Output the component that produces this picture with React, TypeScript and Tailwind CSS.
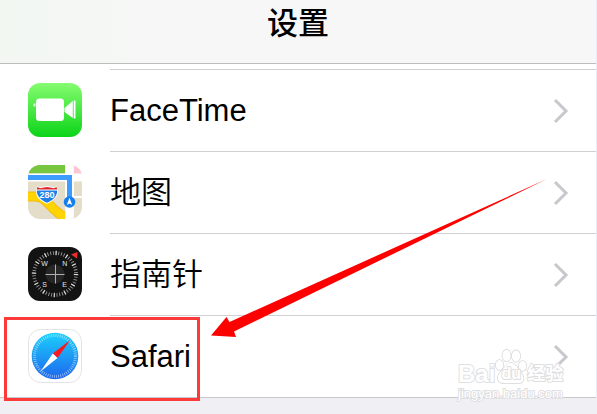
import type { ReactNode } from "react";

type SettingsItem = {
  name: string;
  icon: ReactNode;
  highlighted?: boolean;
};

const FaceTimeIcon = () => (
  <svg viewBox="0 0 54 54" className="w-full h-full" aria-hidden="true">
    <defs>
      <linearGradient id="facetime" x1="0" y1="0" x2="0" y2="1">
        <stop offset="0" stopColor="#86fc70" />
        <stop offset="1" stopColor="#0bd418" />
      </linearGradient>
    </defs>
    <rect width="54" height="54" rx="12" fill="url(#facetime)" />
    <rect x="8" y="15.5" width="28" height="22.5" rx="3.5" fill="#fff" />
    <rect x="5.5" y="20.5" width="2" height="3" rx="0.5" fill="#d4f8d0" />
    <path d="M36.5 25 44.8 18V35L36.5 29Z" fill="#fff" />
    <path d="M46.6 17.5V35.5" stroke="#fff" strokeWidth="1.8" />
  </svg>
);

const MapsIcon = () => (
  <svg viewBox="0 0 54 54" className="w-full h-full" aria-hidden="true">
    <defs>
      <clipPath id="maps">
        <rect width="54" height="54" rx="12" />
      </clipPath>
    </defs>
    <g clipPath="url(#maps)">
      <rect width="54" height="54" fill="#e4ddca" />
      <path d="M0 8.5V0H37V8.5Z" fill="#76c63f" />
      <path d="M46 0H54V8.5H46Z" fill="#fbc6d2" />
      <path d="M45 12.5H54" stroke="#fff" strokeWidth="8" />
      <path d="M45 32H54" stroke="#fff" strokeWidth="2" />
      <path d="M0 31.5H7C18 32 21 41 28 46C32 50 34 51 38 52" stroke="#f3ba12" strokeWidth="10" fill="none" />
      <path d="M0 31.5H7C18 32 21 41 28 46C32 50 34 51 38 52" stroke="#ffd400" strokeWidth="8" fill="none" />
      <path d="M37.3 0H45.8V54H37.3Z" fill="#fff" />
      <path d="M0 12.5H41.5V36" stroke="#fff" strokeWidth="8" fill="none" />
      <path d="M0 12.5H41.5V36" stroke="#3f9cff" strokeWidth="5" fill="none" />
      <path d="M9.5 21 12 22.5 19 21 26 22.5 28.5 21 30 25C30.5 32 25 36 19 38.8C12 36 7.5 32 8 25Z" fill="#fff" />
      <path d="M9.5 22 12 23.3 19 22 26 23.3 28.5 22 29.3 24.5H8.7Z" fill="#dc2630" />
      <path d="M8.8 25.5H29.2C29.5 31 25 35 19 37.8C13 35 8.5 31 8.8 25.5Z" fill="#1e7fe8" />
      <text x="19" y="33" textAnchor="middle" fontSize="9" fontWeight="700" fill="#fff">
        280
      </text>
      <circle cx="41.5" cy="37" r="5.8" fill="#167ff0" />
      <path d="M41.5 32.8 44.2 40 41.5 38.5 38.8 40Z" fill="#fff" />
    </g>
  </svg>
);

const CompassIcon = () => (
  <svg viewBox="0 0 54 54" className="w-full h-full" aria-hidden="true">
    <rect width="54" height="54" rx="12" fill="#131313" />
    <circle cx="27" cy="27" r="21" fill="none" stroke="#999" strokeWidth="3.6" strokeDasharray="0.9 1.849" />
    <circle cx="27" cy="27" r="21" fill="none" stroke="#ddd" strokeWidth="4.4" strokeDasharray="1.1 9.896" />
    <circle cx="27" cy="27" r="9.5" fill="#262626" />
    <path d="M27.5 17.5V36.5M17.5 27.5H36.5" stroke="#b0b0b0" strokeWidth="1" />
    <path d="M43 7.5 49.5 5 49 11.5Z" fill="#f22b2b" />
    <g textAnchor="middle" fontSize="7" fill="#e4e4e4">
      <text x="16.5" y="18.7">W</text>
      <text x="36.7" y="18.7">N</text>
      <text x="16.7" y="40">S</text>
      <text x="36.7" y="40">E</text>
    </g>
  </svg>
);

const SafariIcon = () => (
  <svg viewBox="0 0 54 54" className="w-full h-full" aria-hidden="true">
    <defs>
      <linearGradient id="safari" x1="0" y1="0" x2="0" y2="1">
        <stop offset="0" stopColor="#1bd0fb" />
        <stop offset="1" stopColor="#1e66ee" />
      </linearGradient>
    </defs>
    <rect x="0.5" y="0.5" width="53" height="53" rx="12" fill="#fff" stroke="#e4e4e4" />
    <circle cx="27" cy="27" r="23.3" fill="url(#safari)" />
    <circle cx="27" cy="27" r="20.5" fill="none" stroke="#fff" strokeOpacity="0.55" strokeWidth="3" strokeDasharray="0.8 1.347" />
    <path d="M42.2 11 24.8 24.5 29.5 29Z" fill="#f81a1e" />
    <path d="M24.8 24.5 12.5 42.5 29.5 29Z" fill="#fff" />
  </svg>
);

const Chevron = () => (
  <svg viewBox="0 0 16 26" className="w-4 h-[26px]" fill="none" stroke="#c7c7cc" strokeWidth="3" aria-hidden="true">
    <path d="M2 2 13 13 2 24" />
  </svg>
);

const items: SettingsItem[] = [
  { name: "FaceTime", icon: <FaceTimeIcon /> },
  { name: "地图", icon: <MapsIcon /> },
  { name: "指南针", icon: <CompassIcon /> },
  { name: "Safari", icon: <SafariIcon />, highlighted: true },
];

const SettingsRow = ({ name, icon, highlighted }: SettingsItem) => (
  <li className="relative last:border-b last:border-[#c8c7cc]">
    <button className="flex items-start gap-7 w-full pl-7 text-left">
      <span className="w-[54px] h-[54px] mt-[13px] shrink-0">{icon}</span>
      <span
        className={`flex flex-1 items-center justify-between pr-[27px] ${
          highlighted ? "h-[81px]" : "h-[82px] border-b border-[#d0d0d3]"
        }`}
      >
        <span className="text-[31px] leading-10 font-[350]">{name}</span>
        <Chevron />
      </span>
    </button>
    {highlighted && (
      <span className="absolute left-1 top-px w-[196px] h-[84px] border-3 border-[#fd3a3a] pointer-events-none" />
    )}
  </li>
);

const Watermark = () => (
  <div className="absolute right-6 top-[348px] w-[115px] pointer-events-none text-white [-webkit-text-stroke:2px_#dfdfe2] [paint-order:stroke_fill]">
    <div className="flex items-end h-9 font-bold">
      <span className="text-2xl leading-5">Bai</span>
      <span className="relative w-8 h-9">
        <svg viewBox="0 0 32 36" className="absolute inset-0" fill="#fff" stroke="#d6d6da" strokeWidth="1.4" aria-hidden="true">
          <ellipse cx="4.5" cy="17" rx="3.8" ry="5" />
          <ellipse cx="11.5" cy="7.5" rx="4.2" ry="5.8" />
          <ellipse cx="21" cy="8" rx="4.2" ry="5.8" />
          <ellipse cx="27.5" cy="18" rx="3.8" ry="5" />
          <path d="M16 15C11 15 10 20 6 23.500C0 29 3 36 10 35.200H22C30 36 30 28 25 23.500C22 20 21 15 16 15Z" />
        </svg>
        <span className="absolute inset-x-0 bottom-0 text-center text-base leading-5">du</span>
      </span>
      <span className="text-lg leading-5">经验</span>
    </div>
    <div className="text-[13px] leading-5">jingyan.baidu.com</div>
  </div>
);

const App = () => {
  return (
    <div className="relative min-h-screen overflow-hidden bg-[#efeff4] text-black font-['Liberation_Sans','Noto_Sans_CJK_SC',sans-serif]">
      <div className="border-r border-[#e8edf8]">
        {/* Title bar */}
        <header className="h-16 pb-4 flex items-center justify-center border-b border-[#bdbdbd] bg-linear-to-r from-[#f2f7f2] via-[#f7f7f7] via-30% to-[#f7f7f7]">
          <h1 className="text-[31px] leading-10 font-medium">设置</h1>
        </header>

        {/* App list */}
        <main className="bg-white">
          <div className="ml-[110px] h-1.5 border-b border-[#d0d0d3]" />
          <ul>
            {items.map((item) => (
              <SettingsRow key={item.name} {...item} />
            ))}
          </ul>
        </main>
      </div>

      <Watermark />

      {/* Pointer to the highlighted row */}
      <svg className="absolute left-0 top-0 pointer-events-none" width="560" height="360" viewBox="0 0 560 360" aria-hidden="true">
        <path d="M211 335.5 226.5 317 229.5 322 547 179 234 331.5 236 337Z" fill="#fe0000" />
      </svg>
    </div>
  );
};

export default App;
